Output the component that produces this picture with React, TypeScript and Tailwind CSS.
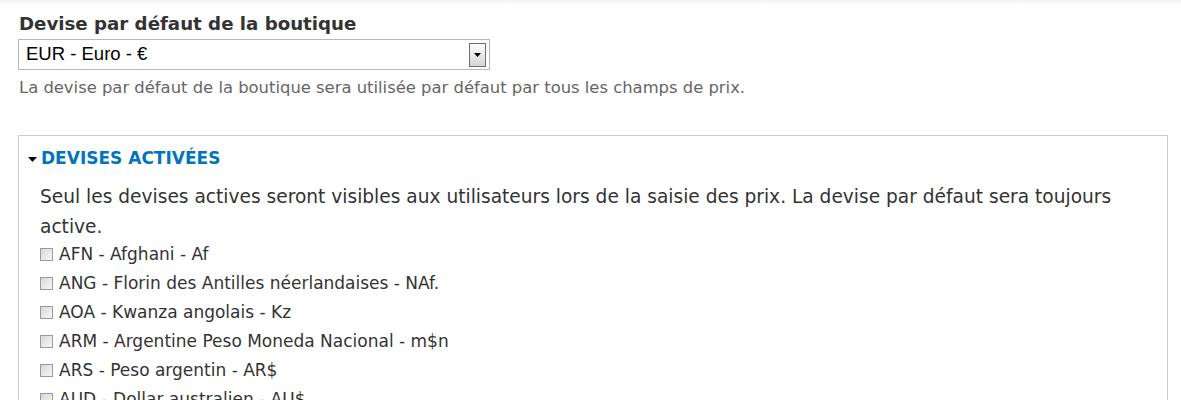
import React from 'react';

const currencies = [
  'AFN - Afghani - Af',
  'ANG - Florin des Antilles néerlandaises - NAf.',
  'AOA - Kwanza angolais - Kz',
  'ARM - Argentine Peso Moneda Nacional - m$n',
  'ARS - Peso argentin - AR$',
  'AUD - Dollar australien - AU$',
];

const Checkbox: React.FC = () => (
  <span className="inline-block w-[13px] h-[13px] border border-[#9a9a9a] bg-gradient-to-br from-[#d8d8d8] to-[#f7f7f7] shrink-0" />
);

export default function App() {
  return (
    <div className="w-[1181px] h-[400px] overflow-hidden bg-white font-['DejaVu_Sans',sans-serif] text-[#333]">
      <div className="h-[6px] bg-gradient-to-b from-[#f3f3f3] to-white" />
      <div className="pl-[19px] pr-[14px] pt-[5px]">
        <div className="text-[18.2px] font-bold leading-[26px] text-[#333]">Devise par défaut de la boutique</div>
        <div className="ml-[-1px] mt-[2px] w-[472px] h-[31px] border border-[#b8b8b8] flex items-center justify-between pl-[7px] pr-[3px]">
          <span className="font-['Liberation_Sans',Arial,sans-serif] text-[18.5px] leading-none text-black">EUR - Euro - €</span>
          <span className="w-[17px] h-[24px] border border-[#707070] bg-gradient-to-b from-white to-[#d5d5d5] flex items-center justify-center">
            <svg width="7" height="4" viewBox="0 0 7 4">
              <polygon points="0,0 7,0 3.5,4" fill="#000" />
            </svg>
          </span>
        </div>
        <p className="mt-[7px] text-[16.4px] leading-[22px] text-[#666]">
          La devise par défaut de la boutique sera utilisée par défaut par tous les champs de prix.
        </p>
        <fieldset className="ml-[-1px] mt-[36px] w-[1150px] border border-[#ccc] pl-[21px] pr-[20px] pt-[10px]">
          <div className="flex items-center ml-[-12px] h-[26px]">
            <svg width="9" height="5" viewBox="0 0 9 5" className="mr-[4px]">
              <polygon points="0,0 9,0 4.5,5" fill="#000" />
            </svg>
            <span className="text-[17px] font-bold text-[#0074bd] uppercase">Devises activées</span>
          </div>
          <p className="mt-[10px] text-[18.6px] leading-[30px] text-[#333]">
            Seul les devises actives seront visibles aux utilisateurs lors de la saisie des prix. La devise par défaut sera toujours active.
          </p>
          <div className="flex flex-col mt-[-2px]">
            {currencies.map((c) => (
              <label key={c} className="flex items-center h-[29px] gap-[6px] text-[17px] text-[#333]">
                <Checkbox />
                <span>{c}</span>
              </label>
            ))}
          </div>
        </fieldset>
      </div>
    </div>
  );
}
